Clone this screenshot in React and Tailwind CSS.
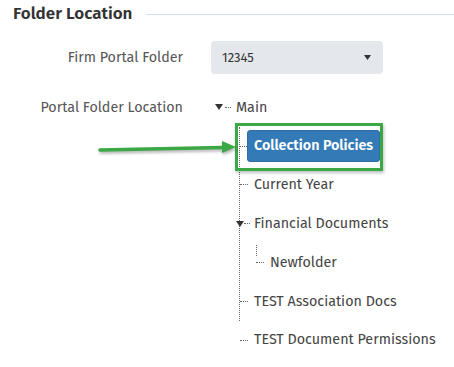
const font = { fontFamily: '"Fira Sans", "Noto Sans", "Open Sans", sans-serif' }

function Dots({ w = 'w-[8px]' }) {
  return <span className={`${w} border-t border-dotted border-[#666] shrink-0`} />
}

function Caret() {
  return (
    <svg width="8" height="6" viewBox="0 0 8 6" className="shrink-0">
      <path d="M0 0 L8 0 L4 6 Z" fill="#333" />
    </svg>
  )
}

function Row({ children, className = '' }) {
  return <div className={`h-[38.8px] flex items-center ${className}`}>{children}</div>
}

export default function App() {
  return (
    <div className="relative w-[454px] h-[367px] bg-white text-[14.3px] overflow-hidden" style={font}>
      {/* 标题 + 分隔线 */}
      <div className="flex items-center gap-[14px] pl-[13px] pt-[4px] h-[24px]">
        <span className="text-[17px] font-semibold text-[#333] leading-5">Folder Location</span>
        <span className="flex-1 border-t border-[#cfe0f2]" />
      </div>

      <div className="grid grid-cols-[183px_1fr] gap-x-[28px] mt-[17px]">
        <div className="flex items-center justify-end h-[33px] text-[#555]">Firm Portal Folder</div>
        <div className="w-[172px] h-[33px] rounded-[4px] bg-[#e4e7eb] flex items-center justify-between pl-[11px] pr-[12px] text-[13px] text-[#333]">
          <span>12345</span>
          <svg width="7" height="5" viewBox="0 0 7 5">
            <path d="M0 0 L7 0 L3.5 5 Z" fill="#333" />
          </svg>
        </div>

        <div className="flex items-center justify-end h-[38.8px] mt-[14px] text-[#555]">Portal Folder Location</div>
        <div className="mt-[14px] text-[#444]">
          <Row className="pl-[4px] gap-[2px]">
            <Caret />
            <Dots w="w-[6px]" />
            <span className="ml-[3px]">Main</span>
          </Row>
          <div className="ml-[28px] border-l border-dotted border-[#666]">
            <Row>
              <Dots w="w-[7px]" />
              <span className="h-[32px] px-[6px] flex items-center rounded-[3px] bg-[#337ab7] border border-[#2e6da4] text-white font-semibold whitespace-nowrap">
                Collection Policies
              </span>
            </Row>
            <Row>
              <Dots />
              <span className="ml-[6px]">Current Year</span>
            </Row>
            <Row className="ml-[-4px]">
              <Caret />
              <Dots w="w-[6px]" />
              <span className="ml-[4px]">Financial Documents</span>
            </Row>
            <Row className="ml-[16px] relative">
              <span className="absolute left-0 top-[2px] h-[11px] border-l border-dotted border-[#666]" />
              <Dots />
              <span className="ml-[6px]">Newfolder</span>
            </Row>
            <Row>
              <Dots />
              <span className="ml-[6px]">TEST Association Docs</span>
            </Row>
          </div>
          <Row className="ml-[29px]">
            <Dots />
            <span className="ml-[6px] whitespace-nowrap">TEST Document Permissions</span>
          </Row>
        </div>
      </div>

      {/* 标注：绿色框与箭头 */}
      <div className="absolute left-[235px] top-[123px] w-[148px] h-[48px] border-[3px] border-[#3aa845] shadow-[1px_2px_3px_rgba(0,0,0,0.25)]" />
      <svg className="absolute left-[95px] top-[135px]" width="146" height="26" viewBox="0 0 146 26" style={{ filter: 'drop-shadow(1px 2px 1.5px rgba(0,0,0,0.3))' }}>
        <path d="M5 15 L128 12.5" stroke="#3aa845" strokeWidth="3.5" strokeLinecap="round" />
        <path d="M127 6 L141 12 L127 18 Z" fill="#3aa845" />
      </svg>
    </div>
  )
}
